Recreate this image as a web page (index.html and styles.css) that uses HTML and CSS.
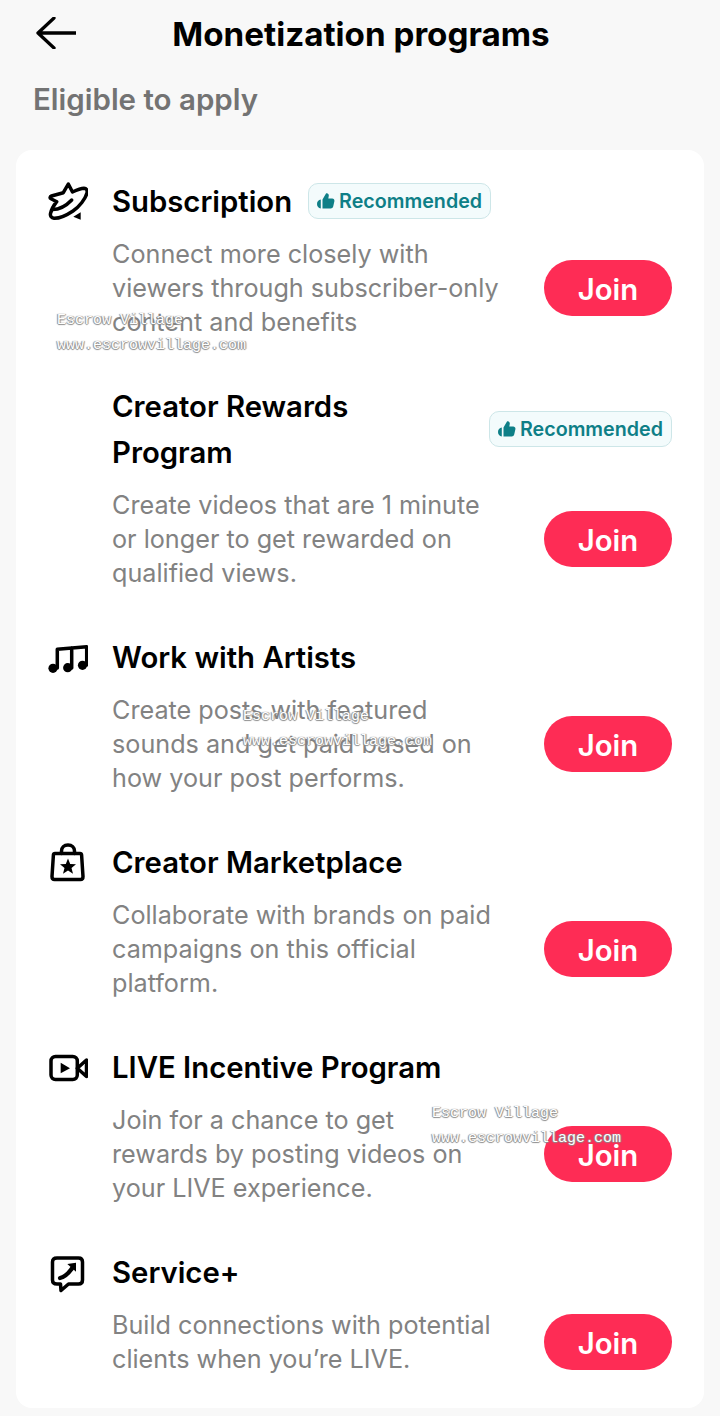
FILE: index.html
```html
<!DOCTYPE html>
<html>
  <head>
    <title>Monetization programs</title>
    <link rel="stylesheet" href="styles.css">
  </head>
  <body>
    <header class="top-bar">
      <svg class="back-icon" viewBox="0 0 40 32" width="40" height="32">
        <path d="M40 16H2M18 1 2 16l16 15" />
      </svg>
      <h1>Monetization programs</h1>
    </header>

    <h2 class="section-label">Eligible to apply</h2>

    <div class="card">
      <div class="program">
        <svg class="program-icon" viewBox="0 0 40 40" width="40" height="40">
          <path d="M20.300 2 24.500 10C29 8 33 6.500 36 6.300 38.500 6.300 39.500 8 39 11 37.500 17 31 25 25 29 19 33 11 36.500 6 36.300 3.500 36 2 34 2.500 31.500 3.500 27 6 23 8.700 19.700L3 16.800C1.500 16 2 14.500 3.500 14L15.300 10.700Z" />
          <path d="M4.500 27.500C11 27.500 18 24 23.700 18" />
          <path class="solid" d="M25.300 34.700 32.700 30.300V37.700Z" />
        </svg>
        <div class="program-body">
          <div class="program-head">
            <h3>Subscription</h3>
            <span class="badge">
              <svg viewBox="0 0 18 18" width="18" height="18"><path d="M5.500 7.500 9 1.500c1.500-.5 3 .5 2.800 2.200L11.300 6.500h3.900c1.500 0 2.500 1.300 2.200 2.700l-1.200 5.300c-.3 1.300-1.300 2-2.500 2H5.500ZM3.800 7.500v9C1.500 16.200 0 14.500 0 12s1.500-4.200 3.800-4.500Z" /></svg>
              Recommended
            </span>
          </div>
          <div class="program-info">
            <p>Connect more closely with viewers through subscriber-only content and benefits</p>
            <button>Join</button>
          </div>
        </div>
      </div>

      <div class="program">
        <div class="program-icon"></div>
        <div class="program-body">
          <div class="program-head">
            <h3>Creator Rewards Program</h3>
            <span class="badge">
              <svg viewBox="0 0 18 18" width="18" height="18"><path d="M5.500 7.500 9 1.500c1.500-.5 3 .5 2.800 2.200L11.300 6.500h3.900c1.500 0 2.500 1.300 2.200 2.700l-1.200 5.300c-.3 1.300-1.300 2-2.500 2H5.500ZM3.800 7.500v9C1.500 16.200 0 14.500 0 12s1.500-4.200 3.800-4.500Z" /></svg>
              Recommended
            </span>
          </div>
          <div class="program-info">
            <p>Create videos that are 1 minute or longer to get rewarded on qualified views.</p>
            <button>Join</button>
          </div>
        </div>
      </div>

      <div class="program">
        <svg class="program-icon" viewBox="0 0 40 40" width="40" height="40">
          <path d="M9.300 30V11.300L38.700 8.700V27M23.700 30V10" />
          <circle class="solid" cx="5" cy="30.300" r="4.600" />
          <circle class="solid" cx="19.700" cy="29.700" r="4.600" />
          <circle class="solid" cx="34.500" cy="27.300" r="4.600" />
        </svg>
        <div class="program-body">
          <div class="program-head">
            <h3>Work with Artists</h3>
          </div>
          <div class="program-info">
            <p>Create posts with featured sounds and get paid based on how your post performs.</p>
            <button>Join</button>
          </div>
        </div>
      </div>

      <div class="program">
        <svg class="program-icon" viewBox="0 0 40 40" width="40" height="40">
          <path d="M7 10.500H32C33 10.500 33.500 11 33.600 12L35 33.500C35 35.500 34 36.500 32.500 36.500H6.500C5 36.500 4 35.500 4 33.500L5.400 12C5.500 11 6 10.500 7 10.500Z" />
          <path d="M13.500 10.500V8C13.500 4.500 16 2 20 2S26.500 4.500 26.500 8V10.500" />
          <path class="solid" d="M20 15.500 22.200 20.900 28 21.300 23.500 25 25 30.700 20 27.600 15 30.700 16.500 25 12 21.300 17.800 20.900Z" />
        </svg>
        <div class="program-body">
          <div class="program-head">
            <h3>Creator Marketplace</h3>
          </div>
          <div class="program-info">
            <p>Collaborate with brands on paid campaigns on this official platform.</p>
            <button>Join</button>
          </div>
        </div>
      </div>

      <div class="program">
        <svg class="program-icon" viewBox="0 0 40 40" width="40" height="40">
          <rect x="3" y="8.500" width="26.300" height="23" rx="4.500" />
          <path class="solid" d="M12.700 14.700 22 20.300 12.700 25.300Z" />
          <path d="M29.300 20.300 38.500 12V28.500Z" />
        </svg>
        <div class="program-body">
          <div class="program-head">
            <h3>LIVE Incentive Program</h3>
          </div>
          <div class="program-info">
            <p>Join for a chance to get<br>rewards by posting videos on your LIVE experience.</p>
            <button>Join</button>
          </div>
        </div>
      </div>

      <div class="program">
        <svg class="program-icon" viewBox="0 0 40 40" width="40" height="40">
          <path d="M9 5H30.500C33 5 34.500 6.500 34.500 9V27C34.500 29.500 33 31 30.500 31H20.500L13 37.500 12.500 31H9C6 31 4.500 29.500 4.500 27V9C4.500 6.500 6 5 9 5Z" />
          <path class="thick" d="M12 25C17 24 21 20 25 14" />
          <path class="solid" d="M19.300 11 28 9.700V18.700Z" />
        </svg>
        <div class="program-body">
          <div class="program-head">
            <h3>Service+</h3>
          </div>
          <div class="program-info">
            <p>Build connections with potential clients when you’re LIVE.</p>
            <button>Join</button>
          </div>
        </div>
      </div>
    </div>

    <!-- site stamps over the page -->
    <div class="stamp stamp-one">Escrow Village<br>www.escrowvillage.com</div>
    <div class="stamp stamp-two">Escrow Village<br>www.escrowvillage.com</div>
    <div class="stamp stamp-three">Escrow Village<br>www.escrowvillage.com</div>
  </body>
</html>
```

FILE: styles.css
```css
html,
body {
  height: 100%;
}

body {
  position: relative;
  margin: 0;
  overflow: hidden;
  background-color: #f8f8f8;
  color: #000;
  font-family: Inter, "Liberation Sans", sans-serif;
}

.top-bar {
  display: grid;
  grid-template-columns: 1fr auto 1fr;
  align-items: center;
  height: 66px;
  padding: 0 36px;
}

.top-bar h1 {
  grid-column: 2;
  grid-row: 1;
  margin: 0;
  padding: 2px 0 0 2px;
  font-size: 33.200px;
  font-weight: 700;
}

.back-icon {
  grid-column: 1;
  grid-row: 1;
  fill: none;
  stroke: #000;
  stroke-width: 3.300;
  stroke-linecap: round;
  stroke-linejoin: round;
}

.section-label {
  margin: 16px 0 34px 33px;
  font-size: 29.500px;
  line-height: 34px;
  font-weight: 600;
  color: #737373;
}

.card {
  display: flex;
  flex-direction: column;
  gap: 44px;
  margin: 0 16px;
  padding: 28px 32px 32px;
  background-color: #fff;
  border-radius: 16px;
}

.program {
  display: flex;
}

.program-icon {
  flex: none;
  width: 40px;
  height: 40px;
  margin: 4px 24px 0 0;
  fill: none;
  stroke: #000;
  stroke-width: 3.500;
  stroke-linejoin: round;
  stroke-linecap: round;
}

.program-icon .solid {
  fill: #000;
  stroke: none;
}

.program-icon .thick {
  stroke-width: 4.200;
}

.program-body {
  flex: 1;
  min-width: 0;
}

.program-head {
  display: flex;
  align-items: center;
  gap: 16px;
}

.program-head h3 {
  margin: 0;
  padding-top: 1px;
  font-size: 29.300px;
  line-height: 46px;
  font-weight: 600;
}

.badge {
  flex: none;
  display: flex;
  align-items: center;
  gap: 4px;
  box-sizing: border-box;
  height: 36px;
  margin: -1px 0 0 auto;
  padding: 0 8px;
  background-color: #f3fbfc;
  border: 1px solid #cde6e8;
  border-radius: 10px;
  color: #0e7f87;
  font-size: 19.700px;
  font-weight: 600;
}

.program-head h3 + .badge {
  margin-left: 0;
}

.badge svg {
  fill: #0e7f87;
}

.program-info {
  display: flex;
  align-items: center;
  justify-content: space-between;
  margin-top: 12px;
}

.program-info p {
  width: 392px;
  margin: 0;
  font-size: 25.200px;
  line-height: 34px;
  color: #828282;
}

button {
  flex: none;
  width: 128px;
  height: 56px;
  padding: 2px 0 0;
  border: none;
  border-radius: 28px;
  background-color: #fe2c55;
  color: #fff;
  font-family: inherit;
  font-size: 29.300px;
  font-weight: 600;
}

.stamp {
  position: absolute;
  font-family: "Liberation Mono", monospace;
  font-size: 15px;
  line-height: 25px;
  white-space: nowrap;
  color: #fff;
  text-shadow: -1px 0 1px #8a8a8a, 1px 0 1px #8a8a8a, 0 1px 1px #8a8a8a;
}

.stamp-one {
  left: 57px;
  top: 308px;
}

.stamp-two {
  left: 243px;
  top: 704px;
}

.stamp-three {
  left: 432px;
  top: 1101px;
}
```
